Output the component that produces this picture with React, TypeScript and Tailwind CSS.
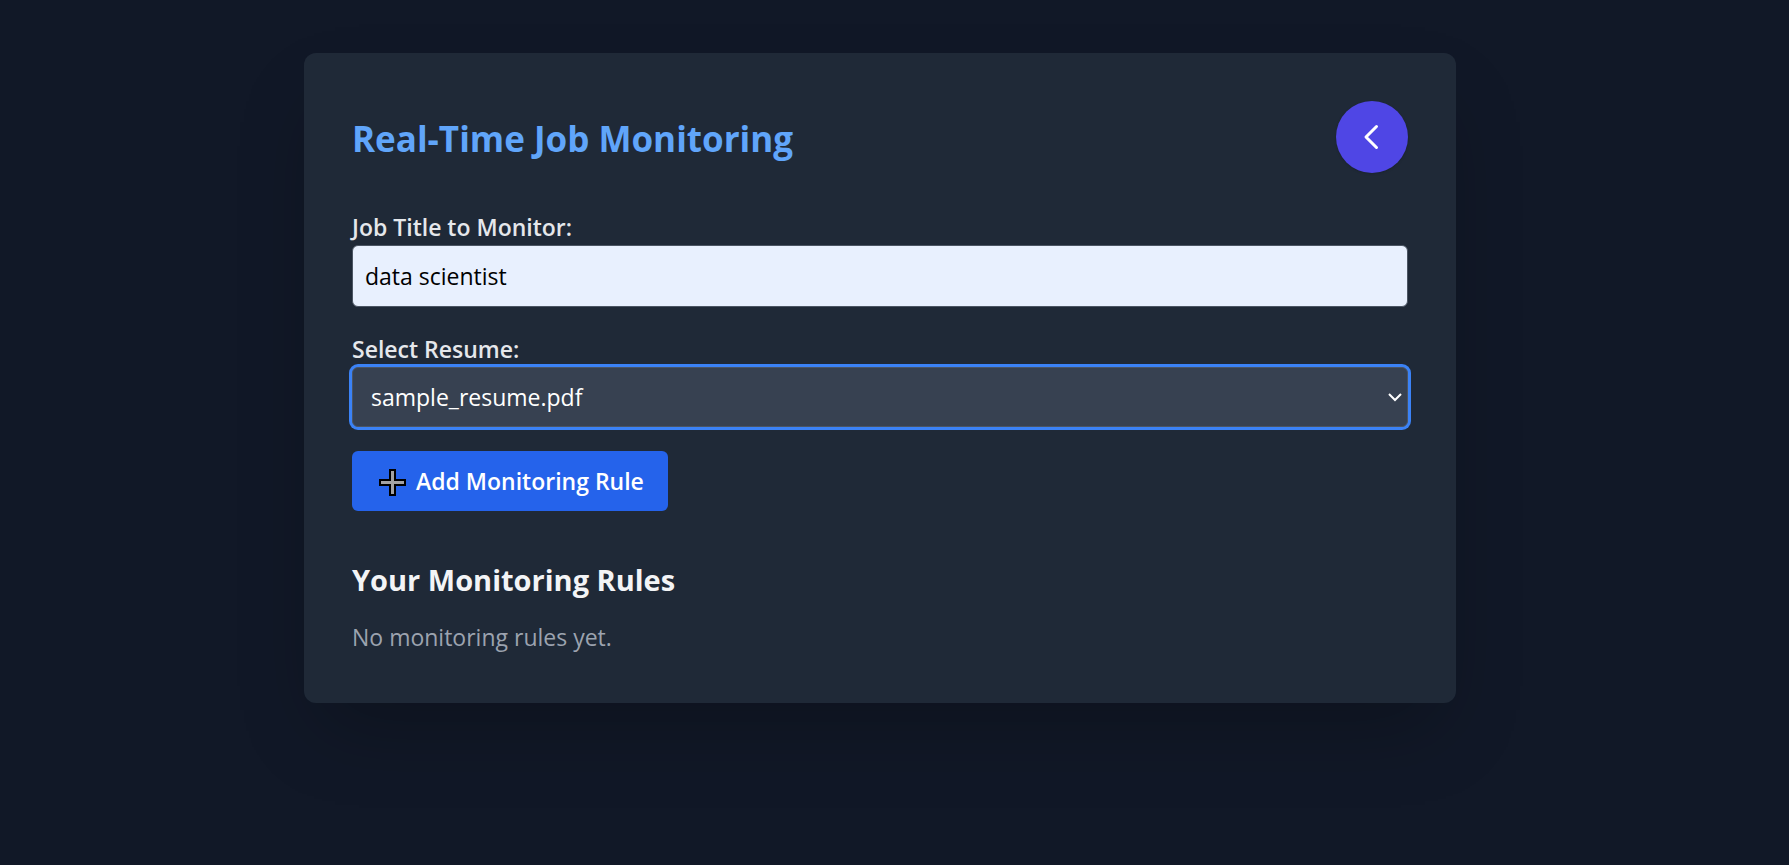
import { useState } from "react";

export default function App() {
  const [title, setTitle] = useState("data scientist");

  return (
    <div className="min-h-screen bg-[#111827] pt-[53px] pr-[53px] pb-12 pl-6 font-['Open_Sans','Noto_Sans',sans-serif] text-[23px] leading-9 text-gray-100">
      <main className="mx-auto w-full max-w-6xl rounded-xl bg-[#1f2937] p-12 shadow-[0_38px_75px_-18px_rgba(0,0,0,0.25)]">
        <header className="mb-9 flex items-center justify-between">
          <h1 className="pt-1 text-[35px] leading-12 font-bold text-[#60a5fa]">Real-Time Job Monitoring</h1>
          <button
            type="button"
            aria-label="Back"
            className="flex size-18 shrink-0 items-center justify-center rounded-full bg-[#4f46e5] shadow-sm"
          >
            <svg viewBox="0 0 24 24" className="size-9" fill="none" stroke="#fff" strokeWidth="2" strokeLinecap="round" strokeLinejoin="round" aria-hidden="true">
              <path d="M15 19l-7-7 7-7" />
            </svg>
          </button>
        </header>

        <form onSubmit={(e) => e.preventDefault()} className="flex flex-col items-start gap-6">
          <div className="w-full">
            <label htmlFor="job-title" className="block font-semibold text-[#e5e7eb]">
              Job Title to Monitor:
            </label>
            <input
              id="job-title"
              type="text"
              value={title}
              onChange={(e) => setTitle(e.target.value)}
              className="block w-full rounded-md border border-[#4b5563] bg-[#e8f0fe] px-3 py-3 text-black outline-none"
            />
          </div>

          <div className="w-full">
            <label htmlFor="resume" className="block font-semibold text-[#e5e7eb]">
              Select Resume:
            </label>
            <div className="relative">
              <select
                id="resume"
                defaultValue="sample_resume.pdf"
                className="block h-15 w-full appearance-none rounded-md border border-[#4b5563] bg-[#374151] px-[18px] text-white ring-3 ring-[#3b82f6] outline-none"
              >
                <option value="sample_resume.pdf">sample_resume.pdf</option>
              </select>
              <svg viewBox="0 0 16 16" className="pointer-events-none absolute top-[22px] right-[5px] size-4" fill="none" stroke="#fff" strokeWidth="2" aria-hidden="true">
                <path d="M2 5l6 6 6-6" />
              </svg>
            </div>
          </div>

          <button type="submit" className="flex h-15 items-center gap-2 rounded-md bg-[#2563eb] px-6 font-semibold text-white">
            <svg viewBox="0 0 32 32" className="size-8" aria-hidden="true">
              <path d="M14 5h5v10h10v5H19v10h-5V20H4v-5h10z" fill="#a3a3a3" stroke="#000" strokeWidth="2" />
            </svg>
            Add Monitoring Rule
          </button>
        </form>

        <section className="mt-12">
          <h2 className="mb-[18px] text-[29px] leading-[42px] font-bold text-[#f3f4f6]">Your Monitoring Rules</h2>
          <p className="text-[#9ca3af]">No monitoring rules yet.</p>
        </section>
      </main>
    </div>
  );
}
